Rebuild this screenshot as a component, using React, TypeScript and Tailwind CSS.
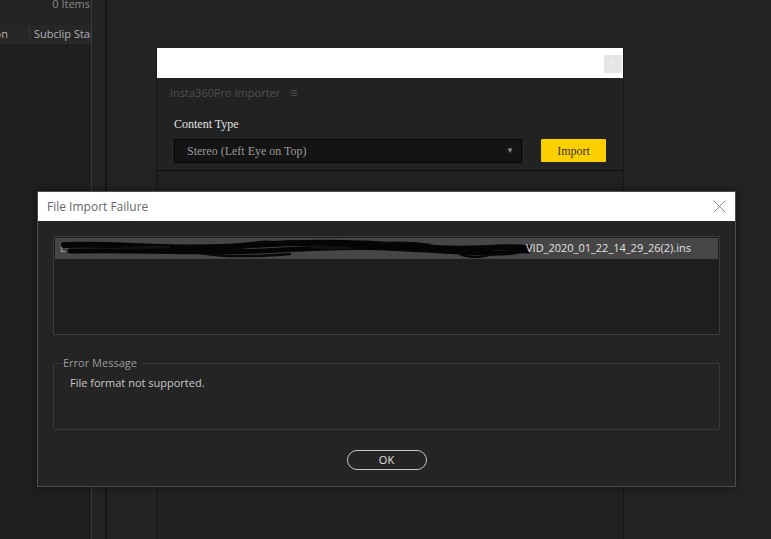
import React from "react";

const sans = { fontFamily: '"Open Sans", "Noto Sans", sans-serif' };
const serif = { fontFamily: '"Liberation Serif", "DejaVu Serif", serif' };

function Scribble() {
  return (
    <svg width="470" height="20" viewBox="0 0 470 20" className="shrink-0">
      <path d="M4 6 C 60 4, 120 12, 180 7 S 300 3, 360 8 S 430 6, 468 9" stroke="#050505" strokeWidth="6" fill="none" strokeLinecap="round" />
      <path d="M10 12 C 80 10, 140 16, 220 11 S 330 9, 400 13 S 450 10, 468 12" stroke="#050505" strokeWidth="5" fill="none" strokeLinecap="round" />
      <path d="M140 14 C 160 18, 190 18, 230 15 M 300 9 C 320 2, 350 3, 370 6 M 400 15 C 410 19, 425 19, 432 14 M 190 5 C 200 2, 215 2, 222 5" stroke="#080808" strokeWidth="2.5" fill="none" strokeLinecap="round" />
      <path d="M60 9 L 110 8 M 250 8 L 290 9" stroke="#111" strokeWidth="3" fill="none" />
    </svg>
  );
}

export default function App() {
  return (
    <div className="relative w-[771px] h-[539px] bg-[#232323] overflow-hidden flex" style={sans}>
      {/* left panel */}
      <div className="w-[92px] shrink-0 flex flex-col border-r border-[#3a3a3a]">
        <div className="h-[25px] flex justify-end">
          <span className="text-[11px] leading-[12px] text-[#8a8a8a] mt-[-2px] pr-[1px]">0 Items</span>
        </div>
        <div className="h-[19px] bg-[#272727] flex items-center text-[11px] text-[#b0b0b0] border-b border-[#2c2c2c]">
          <div className="w-[31px] border-r border-[#333] h-full flex items-center justify-end pr-[21px] overflow-hidden">
            <span className="whitespace-nowrap">on</span>
          </div>
          <div className="pl-[4px] whitespace-nowrap overflow-hidden">Subclip Start</div>
        </div>
        <div className="flex-1 bg-[#1f1f1f]" />
      </div>
      <div className="w-[13px] shrink-0" />
      <div className="w-[2px] shrink-0 bg-[#141414]" />
      <div className="w-[49px] shrink-0" />

      {/* importer window */}
      <div className="w-[468px] shrink-0 mt-[48px] flex flex-col border-x border-[#161616]">
        <div className="h-[30px] bg-white flex items-center justify-end pr-[1px]">
          <div className="w-[18px] h-[18px] bg-[#e6e6e6] mt-[1px] flex items-center justify-center text-[7px] text-[#f5f5f5]">x</div>
        </div>
        <div className="bg-[#222222] px-[17px] pt-[8px] pb-[7px] border-b border-[#0d0d0d]">
          <div className="flex items-center gap-[10px] text-[11px] text-[#505050] ml-[-4px] h-[14px]">
            <span>Insta360Pro Importer</span>
            <span className="text-[12px] leading-none">≡</span>
          </div>
          <div className="mt-[17px] text-[12px] text-[#e0e0e0] leading-[14px]" style={serif}>Content Type</div>
          <div className="mt-[8px] flex items-start gap-[19px]">
            <div className="w-[348px] h-[24px] bg-[#141414] border border-[#060606] flex items-center justify-between pl-[12px] pr-[7px]" style={serif}>
              <span className="text-[12px] text-[#9a9a9a]">Stereo (Left Eye on Top)</span>
              <span className="text-[8px] text-[#8a8a8a]">▼</span>
            </div>
            <div className="w-[65px] h-[23px] bg-[#fcd000] rounded-[1px] flex items-center justify-center text-[12px] text-[#3a3220]" style={serif}>Import</div>
          </div>
        </div>
        <div className="flex-1 bg-[#212121]" />
      </div>

      {/* File Import Failure dialog (modal overlay) */}
      <div className="absolute left-[37px] top-[191px] w-[699px] h-[296px] border border-[#4d4d4d] bg-[#242424] flex flex-col shadow-[0_0_8px_rgba(0,0,0,0.5)]">
        <div className="h-[29px] bg-white flex items-center justify-between pl-[9px] pr-[9px]">
          <span className="text-[12px] text-[#666]">File Import Failure</span>
          <svg width="13" height="13" viewBox="0 0 13 13">
            <path d="M0.5 0.5 L12.5 12.5 M12.5 0.5 L0.5 12.5" stroke="#7a7a7a" strokeWidth="0.9" />
          </svg>
        </div>
        <div className="flex flex-col px-[15px] pt-[15px]">
          <div className="h-[99px] bg-[#1e1e1e] border border-[#3b3b3b] p-[1px]">
            <div className="h-[21px] bg-[#464646] flex items-center overflow-hidden">
              <span className="text-[11px] text-[#aaa] pl-[5px] w-0 overflow-visible">L</span>
              <Scribble />
              <span className="text-[11px] text-[#e2e2e2] whitespace-nowrap -ml-[4px]">VID_2020_01_22_14_29_26(2).ins</span>
            </div>
          </div>
          <fieldset className="mt-[21px] h-[74px] border border-[#3a3a3a] rounded-[2px] px-[8px]">
            <legend className="ml-[0px] pl-[1px] pr-[6px] text-[11px] text-[#9a9a9a] leading-[14px]">Error Message</legend>
            <div className="text-[11px] text-[#c8c8c8] mt-[5px] pl-[8px]">File format not supported.</div>
          </fieldset>
          <div className="flex justify-center mt-[20px]">
            <div className="w-[80px] h-[20px] rounded-full border border-[#c8c8c8] flex items-center justify-center text-[11px] text-[#e0e0e0]">OK</div>
          </div>
        </div>
      </div>
    </div>
  );
}
